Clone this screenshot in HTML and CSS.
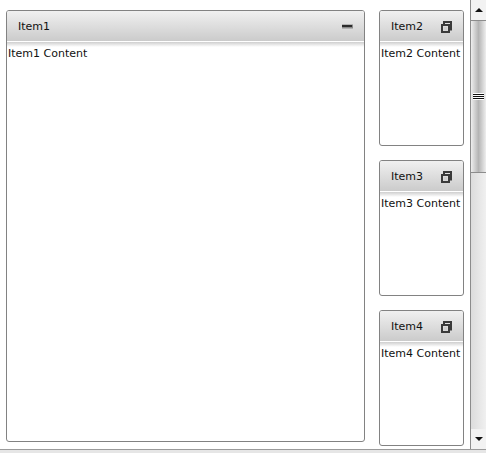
FILE: index.html
```html
<!DOCTYPE html>
<html lang="en">
<head>
<meta charset="utf-8">
<title>Tile View</title>
<link rel="stylesheet" href="styles.css">
</head>
<body>
<div class="window">
  <div class="view">
    <section class="tile tile-large">
      <header class="tile-head head-large">
        <span class="tile-title">Item1</span>
        <svg class="icon" width="11" height="5" viewBox="0 0 11 5"><rect y="0.5" width="11" height="4" fill="#8a8a8a"/><rect y="1" width="10" height="2" fill="#2c2c2c"/></svg>
      </header>
      <div class="tile-fade"></div>
      <div class="tile-body">Item1 Content</div>
    </section>
    <div class="side">
      <section class="tile tile-small">
        <header class="tile-head head-small">
          <span class="tile-title">Item2</span>
          <svg class="icon icon-restore" width="11" height="12" viewBox="0 0 11 12"><path d="M3 3V1H10V8.5H8" fill="none" stroke="#3a3a3a" stroke-width="2"/><rect x="1" y="4" width="7" height="7" fill="none" stroke="#3a3a3a" stroke-width="2"/><rect x="3" y="6" width="3" height="3" fill="#cfcfcf"/></svg>
        </header>
        <div class="tile-fade"></div>
        <div class="tile-body">Item2 Content</div>
      </section>
      <section class="tile tile-small">
        <header class="tile-head head-small">
          <span class="tile-title">Item3</span>
          <svg class="icon icon-restore" width="11" height="12" viewBox="0 0 11 12"><path d="M3 3V1H10V8.5H8" fill="none" stroke="#3a3a3a" stroke-width="2"/><rect x="1" y="4" width="7" height="7" fill="none" stroke="#3a3a3a" stroke-width="2"/><rect x="3" y="6" width="3" height="3" fill="#cfcfcf"/></svg>
        </header>
        <div class="tile-fade"></div>
        <div class="tile-body">Item3 Content</div>
      </section>
      <section class="tile tile-small">
        <header class="tile-head head-small">
          <span class="tile-title">Item4</span>
          <svg class="icon icon-restore" width="11" height="12" viewBox="0 0 11 12"><path d="M3 3V1H10V8.5H8" fill="none" stroke="#3a3a3a" stroke-width="2"/><rect x="1" y="4" width="7" height="7" fill="none" stroke="#3a3a3a" stroke-width="2"/><rect x="3" y="6" width="3" height="3" fill="#cfcfcf"/></svg>
        </header>
        <div class="tile-fade"></div>
        <div class="tile-body">Item4 Content</div>
      </section>
    </div>
    <div class="scrollbar">
      <div class="sb-btn"><span class="arrow-up"></span></div>
      <div class="sb-thumb"><span class="grip"></span></div>
      <div class="sb-track"></div>
      <div class="sb-btn"><span class="arrow-down"></span></div>
    </div>
  </div>
  <div class="bottom-edge"></div>
</div>
</body>
</html>
```
FILE: styles.css
```css
html, body { margin: 0; padding: 0; background: #fff; }
body { width: 486px; height: 453px; overflow: hidden; font: 11px/14px "DejaVu Sans", sans-serif; color: #111; }
.window { display: flex; flex-direction: column; height: 453px; }
.view { display: flex; height: 449px; padding-left: 6px; box-sizing: border-box; }
.tile { box-sizing: border-box; border: 1px solid #828282; border-radius: 3px; background: #fff; overflow: hidden; }
.tile-large { width: 359px; height: 432px; margin-top: 10px; }
.side { display: flex; flex-direction: column; gap: 14px; width: 85px; margin: 10px 0 0 14px; }
.tile-small { height: 136px; }
.tile-head { box-sizing: border-box; height: 30px; display: flex; align-items: center; justify-content: space-between; padding: 0 11px; background: linear-gradient(#f0f0f0, #cbcbcb); }
.tile-title { margin-top: 2px; }
.tile-fade { height: 5px; margin-top: 1px; background: linear-gradient(#cfcfcf, #ffffff); }
.icon { display: block; }
.icon-restore { margin-top: 1px; }
.tile-body { padding-left: 1px; white-space: nowrap; }
.scrollbar { width: 16px; margin-left: 6px; display: flex; flex-direction: column; height: 449px; background: #e8e8e8; border-left: 1px solid #8c8c8c; box-sizing: border-box; }
.sb-btn { height: 20px; display: flex; align-items: center; justify-content: center; background: #f2f2f2; }
.sb-thumb { height: 153px; display: flex; align-items: center; justify-content: center; background: linear-gradient(90deg, #eeeeee, #b4b4b4 50%, #eeeeee); border-top: 1px solid #8c8c8c; border-bottom: 1px solid #8c8c8c; box-sizing: border-box; }
.grip { width: 11px; height: 5px; border: solid #fff; border-width: 1px 0; box-sizing: content-box; background: repeating-linear-gradient(#111 0, #111 1px, #fff 1px, #fff 2px); }
.sb-track { flex: 1; background: linear-gradient(90deg, #dcdcdc, #f0f0f0); }
.arrow-up { border: 4px solid transparent; border-top: 0; border-bottom: 4px solid #111; }
.arrow-down { border: 4px solid transparent; border-bottom: 0; border-top: 4px solid #111; }
.bottom-edge { height: 4px; background: #e6e6e6; border-top: 1px solid #9a9a9a; box-sizing: border-box; }
```
